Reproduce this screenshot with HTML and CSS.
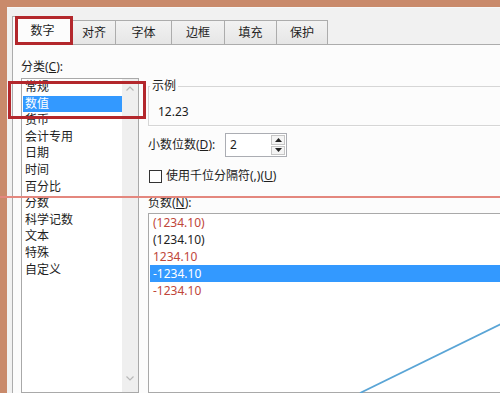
FILE: index.html
```html
<!DOCTYPE html>
<html lang="zh-CN">
<head>
<meta charset="utf-8">
<title>设置单元格格式</title>
<link rel="stylesheet" href="styles.css">
</head>
<body>
<div class="dialog">
  <div class="tabs">
    <div class="tab active t1">数字</div>
    <div class="tab t2">对齐</div>
    <div class="tab t3">字体</div>
    <div class="tab t4">边框</div>
    <div class="tab t5">填充</div>
    <div class="tab t6">保护</div>
  </div>
  <div class="panel">
    <div class="left">
      <div class="label">分类(<u>C</u>):</div>
      <div class="listbox cat">
        <div class="items">
          <div class="item">常规</div>
          <div class="item sel">数值</div>
          <div class="item">货币</div>
          <div class="item">会计专用</div>
          <div class="item">日期</div>
          <div class="item">时间</div>
          <div class="item">百分比</div>
          <div class="item">分数</div>
          <div class="item">科学记数</div>
          <div class="item">文本</div>
          <div class="item">特殊</div>
          <div class="item">自定义</div>
        </div>
        <div class="scrollbar">
          <svg class="chev" width="16" height="16" viewBox="0 0 16 16"><path d="M4.5 9.5 L8 6 L11.5 9.5" fill="none" stroke="#b8b8b8" stroke-width="1.2"/></svg>
          <svg class="chev" width="16" height="16" viewBox="0 0 16 16"><path d="M4.5 6.5 L8 10 L11.5 6.5" fill="none" stroke="#b8b8b8" stroke-width="1.2"/></svg>
        </div>
      </div>
    </div>
    <div class="right">
      <fieldset class="sample">
        <legend>示例</legend>
        <div class="sample-value">12.23</div>
      </fieldset>
      <div class="decimals">
        <span class="dlabel">小数位数(<u>D</u>):</span>
        <div class="spin">
          <span class="spin-value">2</span>
          <div class="spin-btns">
            <div class="spin-btn"><svg width="7" height="4" viewBox="0 0 7 4"><path d="M0 4 L3.5 0 L7 4 Z" fill="#222"/></svg></div>
            <div class="spin-btn"><svg width="7" height="4" viewBox="0 0 7 4"><path d="M0 0 L3.5 4 L7 0 Z" fill="#222"/></svg></div>
          </div>
        </div>
      </div>
      <div class="check">
        <span class="box"></span>
        <span>使用千位分隔符(,)(<u>U</u>)</span>
      </div>
      <div class="label neg-label">负数(<u>N</u>):</div>
      <div class="listbox negs">
        <div class="nitem red">(1234.10)</div>
        <div class="nitem">(1234.10)</div>
        <div class="nitem red">1234.10</div>
        <div class="nitem sel">-1234.10</div>
        <div class="nitem red">-1234.10</div>
      </div>
    </div>
  </div>
</div>
<div class="mark mark-tab"></div>
<div class="mark mark-list"></div>
<div class="redline"></div>
<svg class="diag" width="150" height="80" viewBox="0 0 150 80"><line x1="5" y1="79" x2="150" y2="8" stroke="#5aa5d6" stroke-width="1.8"/></svg>
</body>
</html>
```
FILE: styles.css
```css
html, body {
  margin: 0;
  padding: 0;
  width: 500px;
  height: 393px;
  overflow: hidden;
}
body {
  position: relative;
  background: #c98a6b;
  font-family: "Noto Sans", "Noto Sans CJK SC", sans-serif;
  font-size: 12px;
  color: #1e1e1e;
}
u { text-decoration: underline; text-underline-offset: 1px; }

.dialog {
  margin: 7px 0 0 7px;
  height: 386px;
  box-sizing: border-box;
  padding: 9px 0 0 5px;
  background: #f1f1f1;
  border-top: 1px solid #f7f7f7;
  display: flex;
  flex-direction: column;
}

.tabs {
  display: flex;
  align-items: flex-end;
  height: 28px;
  flex: none;
  margin-top: -1px;
}
.tab {
  box-sizing: border-box;
  height: 24px;
  border: 1px solid #acacac;
  border-bottom: 0;
  background: linear-gradient(#f2f2f2, #e6e6e6);
  display: flex;
  align-items: center;
  justify-content: center;
  margin-left: -1px;
  line-height: 16px;
}
.tab.active {
  height: 29px;
  margin-bottom: -1px;
  background: #fcfcfc;
  position: relative;
  z-index: 1;
  margin-left: 0;
}
.t1 { width: 61px; }
.t2 { width: 44px; }
.t3 { width: 57px; }
.t4 { width: 54px; }
.t5 { width: 53px; }
.t6 { width: 52px; }

.panel {
  flex: 1;
  min-height: 0;
  background: #fcfcfc;
  border-top: 1px solid #acacac;
  border-left: 1px solid #acacac;
  padding: 14px 0 0 8px;
  display: flex;
  overflow: hidden;
}

.left {
  width: 118px;
  flex: none;
  display: flex;
  flex-direction: column;
}
.label {
  line-height: 16px;
  height: 16px;
}
.listbox {
  border: 1px solid #a9a9a9;
  background: #fff;
}
.cat {
  margin-top: 3px;
  flex: 1;
  display: flex;
  min-height: 0;
}
.items {
  flex: 1;
  padding-left: 1px;
}
.item {
  line-height: 16.6px;
  height: 16.6px;
  padding-left: 2px;
}
.item.sel {
  background: #3399ff;
  color: #fff;
}
.scrollbar {
  width: 16px;
  flex: none;
  background: #efefef;
  display: flex;
  flex-direction: column;
  justify-content: space-between;
  padding: 2px 0 6px;
}
.chev { display: block; }

.right {
  width: 370px;
  flex: none;
  margin-left: 9px;
  display: flex;
  flex-direction: column;
}
.sample {
  margin: 19px 0 0 0;
  padding: 10px 0 5px 1px;
  border: 1px solid #d6d6d6;
  box-shadow: 0 1px 0 #fff;
}
.sample legend {
  padding: 0 2px;
  line-height: 16px;
}
.sample-value {
  padding-left: 8px;
  line-height: 16px;
}

.decimals {
  margin-top: 7px;
  height: 24px;
  display: flex;
  align-items: center;
}
.dlabel {
  width: 77px;
  line-height: 16px;
}
.spin {
  width: 62px;
  height: 24px;
  box-sizing: border-box;
  border: 1px solid #abadb3;
  background: #fff;
  display: flex;
}
.spin-value {
  flex: 1;
  padding-left: 4px;
  line-height: 22px;
}
.spin-btns {
  width: 14px;
  display: flex;
  flex-direction: column;
  gap: 1px;
  padding: 1px 1px 1px 0;
}
.spin-btn {
  flex: 1;
  border: 1px solid #c6c6c6;
  background: #f4f4f4;
  display: flex;
  align-items: center;
  justify-content: center;
}
.spin-btn svg { display: block; }

.check {
  margin-top: 11px;
  height: 16px;
  line-height: 16px;
  display: flex;
  align-items: center;
}
.box {
  width: 13px;
  height: 13px;
  box-sizing: border-box;
  border: 1px solid #333;
  background: #fff;
  margin: 0 4px 0 1px;
}

.neg-label {
  margin-top: 11px;
}
.negs {
  margin-top: 2px;
  flex: 1;
  padding-left: 1px;
}
.nitem {
  line-height: 17px;
  height: 17px;
  padding-left: 3px;
}
.nitem.red { color: #c0463a; }
.nitem.sel {
  background: #3399ff;
  color: #fff;
}

.mark {
  position: absolute;
  z-index: 5;
  box-sizing: border-box;
  border: 3px solid #b3272c;
}
.mark-tab {
  left: 15px;
  top: 16px;
  width: 58px;
  height: 29px;
}
.mark-list {
  left: 8px;
  top: 81px;
  width: 138px;
  height: 38px;
}
.redline {
  position: absolute;
  z-index: 4;
  left: 0;
  top: 196px;
  width: 500px;
  height: 2px;
  background: #e4877e;
}
.diag {
  position: absolute;
  z-index: 4;
  left: 355px;
  top: 314px;
}
```
